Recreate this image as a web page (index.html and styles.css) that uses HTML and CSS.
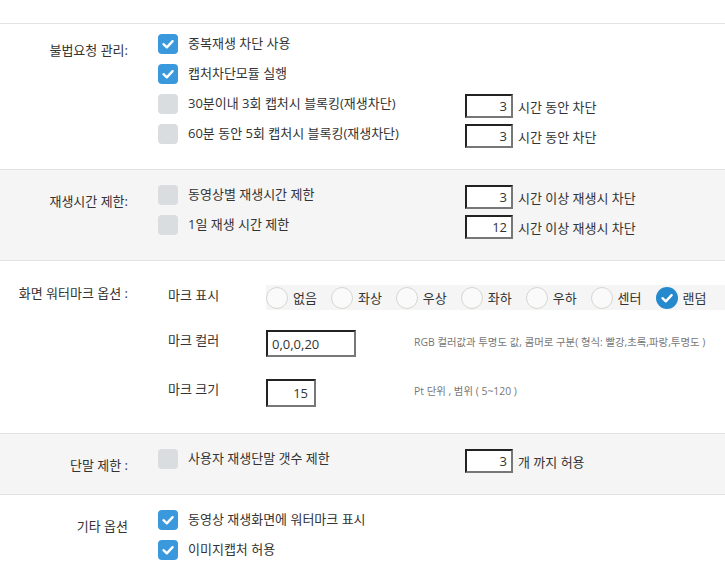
FILE: index.html
```html
<!DOCTYPE html>
<html lang="ko">
<head>
    <meta charset="UTF-8">
    <meta name="viewport" content="width=device-width, initial-scale=1.0">
    <title>재생 보안 설정</title>
    <link rel="stylesheet" href="styles.css">
</head>
<body>
    <div class="top-space"></div>

    <section class="opt-section first">
        <div class="opt-label">불법요청 관리:</div>
        <div class="opt-body">
            <div class="opt-line">
                <label class="check"><span class="box on"><svg viewBox="0 0 20 20"><path d="M5.5 10.2 L8.8 13.3 L14.6 7.2"/></svg></span>중복재생 차단 사용</label>
            </div>
            <div class="opt-line">
                <label class="check"><span class="box on"><svg viewBox="0 0 20 20"><path d="M5.5 10.2 L8.8 13.3 L14.6 7.2"/></svg></span>캡처차단모듈 실행</label>
            </div>
            <div class="opt-line">
                <label class="check"><span class="box"></span>30분이내 3회 캡처시 블록킹(재생차단)</label>
                <div class="side"><input type="text" class="num" value="3"><span>시간 동안 차단</span></div>
            </div>
            <div class="opt-line">
                <label class="check"><span class="box"></span>60분 동안 5회 캡처시 블록킹(재생차단)</label>
                <div class="side"><input type="text" class="num" value="3"><span>시간 동안 차단</span></div>
            </div>
        </div>
    </section>

    <section class="opt-section grey">
        <div class="opt-label">재생시간 제한:</div>
        <div class="opt-body">
            <div class="opt-line">
                <label class="check"><span class="box"></span>동영상별 재생시간 제한</label>
                <div class="side"><input type="text" class="num" value="3"><span>시간 이상 재생시 차단</span></div>
            </div>
            <div class="opt-line">
                <label class="check"><span class="box"></span>1일 재생 시간 제한</label>
                <div class="side"><input type="text" class="num" value="12"><span>시간 이상 재생시 차단</span></div>
            </div>
        </div>
    </section>

    <section class="opt-section mark">
        <div class="opt-label">화면 워터마크 옵션 :</div>
        <div class="opt-body">
            <div class="mark-grid">
                <div class="sub-label">마크 표시</div>
                <div class="radio-strip">
                    <label class="radio"><span class="dot"></span>없음</label>
                    <label class="radio"><span class="dot"></span>좌상</label>
                    <label class="radio"><span class="dot"></span>우상</label>
                    <label class="radio"><span class="dot"></span>좌하</label>
                    <label class="radio"><span class="dot"></span>우하</label>
                    <label class="radio"><span class="dot"></span>센터</label>
                    <label class="radio"><span class="dot on"><svg viewBox="0 0 22 22"><path d="M6.5 11.2 L9.8 14.3 L15.6 8.2"/></svg></span>랜덤</label>
                </div>

                <div class="sub-label">마크 컬러</div>
                <div><input type="text" class="color" value="0,0,0,20"></div>
                <div class="hint">RGB 컬러값과 투명도 값, 콤머로 구분( 형식: 빨강,초록,파랑,투명도 )</div>

                <div class="sub-label">마크 크기</div>
                <div><input type="text" class="size" value="15"></div>
                <div class="hint tall">Pt 단위 , 범위 ( 5~120 )</div>
            </div>
        </div>
    </section>

    <section class="opt-section grey">
        <div class="opt-label">단말 제한 :</div>
        <div class="opt-body">
            <div class="opt-line">
                <label class="check"><span class="box"></span>사용자 재생단말 갯수 제한</label>
                <div class="side"><input type="text" class="num" value="3"><span>개 까지 허용</span></div>
            </div>
        </div>
    </section>

    <section class="opt-section">
        <div class="opt-label">기타 옵션</div>
        <div class="opt-body">
            <div class="opt-line">
                <label class="check"><span class="box on"><svg viewBox="0 0 20 20"><path d="M5.5 10.2 L8.8 13.3 L14.6 7.2"/></svg></span>동영상 재생화면에 워터마크 표시</label>
            </div>
            <div class="opt-line">
                <label class="check"><span class="box on"><svg viewBox="0 0 20 20"><path d="M5.5 10.2 L8.8 13.3 L14.6 7.2"/></svg></span>이미지캡처 허용</label>
            </div>
        </div>
    </section>
</body>
</html>
```

FILE: styles.css
```css
body {
    margin: 0;
    padding: 0;
    font-family: "Open Sans", "Noto Sans CJK KR", sans-serif;
    font-size: 13px;
    color: #333;
    background: #fff;
    overflow: hidden;
}

.top-space {
    height: 23px;
    border-bottom: 1px solid #e3e3e3;
}

/* one settings block */
.opt-section {
    display: flex;
    padding: 15px 0;
    border-bottom: 1px solid #e3e3e3;
}

.opt-section.first {
    padding-top: 10px;
}

.opt-section.grey {
    background-color: #f5f5f5;
}

.opt-section.mark {
    padding: 24px 0 26px;
}

.opt-label {
    width: 128px;
    flex-shrink: 0;
    margin-right: 30px;
    padding-top: 6px;
    text-align: right;
    line-height: 20px;
    white-space: nowrap;
}

.mark .opt-label {
    padding-top: 0;
    line-height: 16px;
}

.opt-body {
    flex: 1;
}

.opt-line {
    display: grid;
    grid-template-columns: 307px auto;
    height: 30px;
}

/* custom checkbox */
.check {
    display: flex;
    align-items: flex-start;
    line-height: 19px;
    white-space: nowrap;
    cursor: pointer;
}

.box {
    width: 20px;
    height: 20px;
    border-radius: 4px;
    background-color: #d9dde0;
    margin-right: 10px;
    flex-shrink: 0;
}

.box.on {
    background-color: #3a98dc;
}

.box svg,
.dot svg {
    display: block;
    width: 100%;
    height: 100%;
}

.box svg path,
.dot svg path {
    fill: none;
    stroke: #fff;
    stroke-width: 2.4;
    stroke-linecap: round;
    stroke-linejoin: round;
}

.side {
    display: flex;
    align-items: center;
    gap: 5px;
    height: 24px;
    white-space: nowrap;
}

input[type="text"] {
    box-sizing: border-box;
    margin: 0;
    font-family: "Open Sans", "Noto Sans CJK KR", sans-serif;
    font-size: 13px;
    color: #333;
    background: #fff;
    border-style: solid;
    border-width: 2px;
    border-color: #222 #777 #777 #222;
    outline: none;
}

.num {
    width: 48px;
    height: 24px;
    padding: 0 4px 0 0;
    text-align: right;
}

/* watermark options */
.mark-grid {
    display: grid;
    grid-template-columns: 98px 148px 1fr;
    grid-template-rows: 45px 49px 28px;
    align-items: start;
    padding-left: 10px;
}

.sub-label {
    line-height: 20px;
    white-space: nowrap;
}

.radio-strip {
    grid-column: 2 / 4;
    display: flex;
    align-items: center;
    height: 25px;
    background-color: #f5f5f5;
    margin-right: -20px;
    white-space: nowrap;
}

.radio {
    display: flex;
    align-items: center;
    margin-right: 14px;
    cursor: pointer;
}

.dot {
    box-sizing: border-box;
    width: 22px;
    height: 22px;
    border-radius: 50%;
    border: 1px solid #d6d6d0;
    background-color: #fafafa;
    margin-right: 5px;
}

.dot.on {
    border: none;
    background-color: #2589cd;
}

.color {
    width: 90px;
    height: 27px;
    padding: 0 0 0 4px;
    font-size: 12px;
}

.size {
    width: 50px;
    height: 28px;
    padding: 0 6px 0 0;
    text-align: right;
}

.hint {
    font-size: 10.4px;
    line-height: 24px;
    color: #777;
    white-space: nowrap;
}

.hint.tall {
    line-height: 25px;
}
```
